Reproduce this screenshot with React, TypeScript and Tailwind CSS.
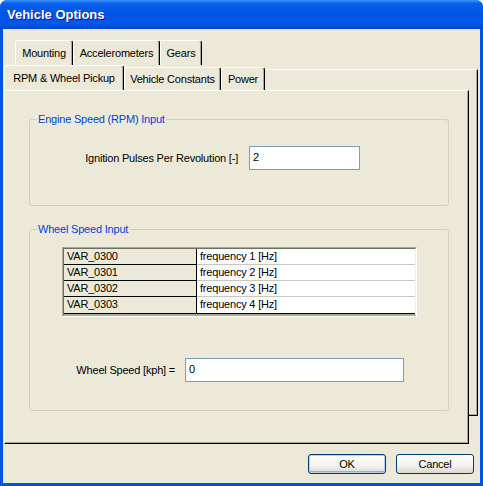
const tabBase =
  "flex items-center justify-center rounded-t-[3px] border-t border-l border-r border-t-white border-l-white border-r-black shadow-[inset_-1px_0_#ACA899] bg-[#ECE9D8]";

function Tab({ label, width, selected = false }: { label: string; width: string; selected?: boolean }) {
  return (
    <div
      className={`${tabBase} ${width} ${selected ? "relative z-20 h-[26px]" : "mt-[2px] h-[23px]"}`}
    >
      {label}
    </div>
  );
}

function GroupBox({ title, height, children }: { title: string; height: string; children: React.ReactNode }) {
  return (
    <div className={`relative ml-[24px] w-[420px] ${height} rounded-[3px] border border-[#D0D0BF]`}>
      <span className="absolute -top-[7px] left-[7px] bg-[#ECE9D8] px-[1px] leading-[13px] text-[#0046D5]">
        {title}
      </span>
      {children}
    </div>
  );
}

const rows = [
  ["VAR_0300", "frequency 1 [Hz]"],
  ["VAR_0301", "frequency 2 [Hz]"],
  ["VAR_0302", "frequency 3 [Hz]"],
  ["VAR_0303", "frequency 4 [Hz]"],
];

export default function App() {
  return (
    <div
      className="flex h-[486px] w-[483px] flex-col overflow-hidden rounded-t-[7px] bg-[#0054E3] text-[11px] text-black"
      style={{ fontFamily: '"Liberation Sans", Arial, sans-serif' }}
    >
      {/* Title bar */}
      <div className="flex h-[29px] shrink-0 items-center bg-[linear-gradient(to_bottom,#3D95FF_0%,#0A5FEE_12%,#0054E3_45%,#0058EB_80%,#0046C8_100%)] px-[7px]">
        <span className="text-[13px] font-bold text-white [text-shadow:1px_1px_#0A1883]">Vehicle Options</span>
      </div>

      {/* Dialog body */}
      <div className="relative mx-[3px] mb-[3px] flex-1 bg-[#ECE9D8] tracking-[-0.2px]">
        {/* back page (second tab row) */}
        <div className="absolute left-[11px] top-[40px] z-0 h-[347px] w-[464px] border border-t-white border-l-white border-r-black border-b-black shadow-[inset_-1px_-1px_#ACA899]" />

        <div className="relative z-10 flex pl-[12px] pt-[11px]">
          <div className="flex h-[25px]">
            <div className={`${tabBase} h-[25px] w-[58px]`}>Mounting</div>
            <div className={`${tabBase} h-[25px] w-[87px]`}>Accelerometers</div>
            <div className={`${tabBase} h-[25px] w-[42px]`}>Gears</div>
          </div>
        </div>

        <div className="relative z-10 flex h-[25px] items-start pl-[1px]">
          <Tab label="RPM & Wheel Pickup" width="w-[120px]" selected />
          <Tab label="Vehicle Constants" width="w-[97px]" />
          <Tab label="Power" width="w-[44px]" />
        </div>

        {/* front page */}
        <div className="relative z-10 ml-[1px] h-[354px] w-[465px] border border-t-white border-l-white border-r-black border-b-black bg-[#ECE9D8] pt-[28px] shadow-[inset_-1px_-1px_#ACA899]">
          <GroupBox title="Engine Speed (RPM) Input" height="h-[87px]">
            <div className="mt-[26px] flex items-center">
              <span className="w-[208px] text-right">Ignition Pulses Per Revolution [-]</span>
              <div className="ml-[11px] flex h-[24px] w-[111px] items-center border border-[#7F9DB9] bg-white px-[3px] pb-[2px]">
                2
              </div>
            </div>
          </GroupBox>

          <div className="h-[23px]" />

          <GroupBox title="Wheel Speed Input" height="h-[182px]">
            <div className="ml-[32px] mt-[17px] w-[355px] border border-t-[#ACA899] border-l-[#ACA899] border-r-white border-b-white">
              <div className="border border-b-[2px] border-t-[#716F64] border-l-[#716F64] border-r-[#F1EFE2] border-b-[#ACA899]">
                <div className="border-b border-black">
                  {rows.map(([name, desc], i) => (
                    <div key={name} className="flex h-[16px]">
                      <div
                        className={`w-[133px] border-r border-black pl-[3px] leading-[15px] ${
                          i < rows.length - 1 ? "border-b border-b-black" : ""
                        }`}
                      >
                        {name}
                      </div>
                      <div
                        className={`flex-1 bg-white pl-[3px] leading-[15px] ${
                          i < rows.length - 1 ? "border-b border-b-[#C8C8C8]" : ""
                        }`}
                      >
                        {desc}
                      </div>
                    </div>
                  ))}
                </div>
              </div>
            </div>

            <div className="mt-[41px] flex items-center">
              <span className="w-[145px] text-right">Wheel Speed [kph] =</span>
              <div className="ml-[10px] flex h-[24px] w-[219px] items-center border border-[#7F9DB9] bg-white px-[3px] pb-[2px]">
                0
              </div>
            </div>
          </GroupBox>
        </div>

        {/* buttons */}
        <div className="mt-[10px] flex justify-end gap-[10px] pr-[6px]">
          <button className="flex h-[20px] w-[78px] items-center justify-center rounded-[3px] border border-[#003C74] bg-[linear-gradient(to_bottom,#FFFFFF,#F3F2EC_60%,#DCD8CC)] shadow-[inset_0_0_0_1px_#B5CFF6,inset_0_-1px_0_1px_#8AB0E8]">
            OK
          </button>
          <button className="flex h-[20px] w-[78px] items-center justify-center rounded-[3px] border border-[#003C74] bg-[linear-gradient(to_bottom,#FFFFFF,#F3F2EC_60%,#DCD8CC)]">
            Cancel
          </button>
        </div>
      </div>
    </div>
  );
}
